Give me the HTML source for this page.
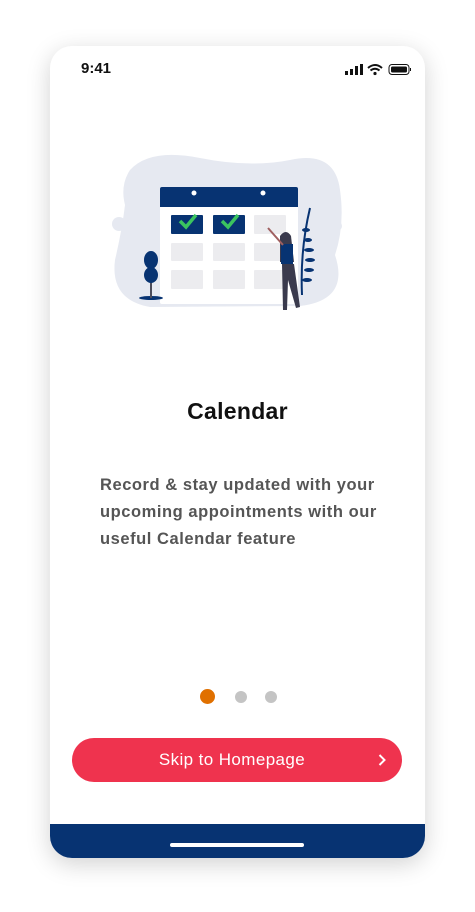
<!DOCTYPE html>
<html><head><style>
body{margin:0;width:475px;height:912px;background:#fff;position:relative;overflow:hidden;font-family:"Liberation Sans",sans-serif}
.phone{position:absolute;left:50px;top:46px;width:375px;height:812px;border-radius:22px;background:#fff;box-shadow:0 6px 24px rgba(0,0,0,.18);overflow:hidden}
.bar{position:absolute;left:0;bottom:0;width:375px;height:34px;background:#073372}
.home{position:absolute;left:120px;bottom:11px;width:134px;height:4px;border-radius:2px;background:#fff}
.time{position:absolute;left:31px;top:14px;font-size:15px;font-weight:bold;color:#111}
h1{position:absolute;top:352px;left:0;width:375px;text-align:center;margin:0;font-size:23px;font-weight:bold;color:#111;letter-spacing:0.3px}
p{position:absolute;left:50px;top:426px;width:300px;margin:0;font-size:16.5px;line-height:27px;color:#555;font-weight:bold;letter-spacing:0.55px}
.dot{position:absolute;top:645px;width:12px;height:12px;border-radius:50%;background:#c4c4c4}
.btn{position:absolute;left:22px;top:692px;width:330px;height:44px;border-radius:22px;background:#ef334e;color:#fff;font-size:17px;text-align:center;line-height:44px;letter-spacing:0.4px;text-indent:-10px}
</style></head><body>
<div class="phone">
<div class="time">9:41</div>
<svg style="position:absolute;left:295px;top:17px" width="66" height="14" viewBox="0 0 66 14">
<rect x="0" y="8" width="3" height="4" fill="#111"/><rect x="5" y="6" width="3" height="6" fill="#111"/><rect x="10" y="3" width="3" height="9" fill="#111"/><rect x="15" y="1" width="3" height="11" fill="#111"/>
<path d="M23 5 Q30 -1 37 5 M25.5 7.5 Q30 4 34.5 7.5" stroke="#111" stroke-width="2" fill="none"/><circle cx="30" cy="10.5" r="1.6" fill="#111"/>
<rect x="44" y="1.5" width="20" height="10" rx="3" fill="none" stroke="#111"/><rect x="46" y="3.5" width="16" height="6" rx="1.5" fill="#111"/><rect x="65" y="5" width="1.5" height="3" fill="#111"/>
</svg>
<svg style="position:absolute;left:50px;top:94px" width="260" height="180" viewBox="100 140 260 180">
<path d="M130 170 Q150 148 200 158 Q250 168 290 160 Q335 150 340 190 Q345 225 335 255 Q350 300 300 306 L150 307 Q110 300 115 260 Q122 230 125 205 Q120 185 130 170Z" fill="#e6e9f1"/>
<circle cx="119" cy="224" r="7" fill="#e6e9f1"/><circle cx="337" cy="226" r="5" fill="#e6e9f1"/><circle cx="326" cy="240" r="3" fill="#e6e9f1"/><circle cx="330" cy="251" r="5" fill="#e6e9f1"/>
<rect x="160" y="187" width="138" height="117" rx="2" fill="#fff"/>
<path d="M162 187 H296 a2 2 0 0 1 2 2 V207 H160 V189 a2 2 0 0 1 2-2Z" fill="#073372"/>
<circle cx="194" cy="193" r="2.5" fill="#fff"/><circle cx="263" cy="193" r="2.5" fill="#fff"/>
<g fill="#ececef">
<rect x="254" y="215" width="32" height="19" rx="1"/>
<rect x="171" y="243" width="32" height="18" rx="1"/><rect x="213" y="243" width="32" height="18" rx="1"/><rect x="254" y="243" width="32" height="18" rx="1"/>
<rect x="171" y="270" width="32" height="19" rx="1"/><rect x="213" y="270" width="32" height="19" rx="1"/><rect x="254" y="270" width="32" height="19" rx="1"/>
</g>
<rect x="171" y="215" width="32" height="19" rx="1" fill="#073372"/><rect x="213" y="215" width="32" height="19" rx="1" fill="#073372"/>
<path d="M180 221 L186 227 L196 215 M222 221 L228 227 L238 215" stroke="#3bc45f" stroke-width="3.5" fill="none"/>
<ellipse cx="151" cy="298" rx="12" ry="2" fill="#073372"/><rect x="150" y="280" width="2" height="18" fill="#4b4b5a"/>
<ellipse cx="151" cy="260" rx="7" ry="9" fill="#073372"/><ellipse cx="151" cy="275" rx="7" ry="8" fill="#073372"/>
<path d="M310 208 Q300 250 302 295" stroke="#073372" stroke-width="2" fill="none"/>
<g fill="#073372"><ellipse cx="306" cy="230" rx="4" ry="2"/><ellipse cx="308" cy="240" rx="4" ry="2"/><ellipse cx="309" cy="250" rx="5" ry="2"/><ellipse cx="310" cy="260" rx="5" ry="2"/><ellipse cx="309" cy="270" rx="5" ry="2"/><ellipse cx="307" cy="280" rx="5" ry="2"/></g>
<path d="M280 236 Q286 228 291 236 L294 262 L280 262Z" fill="#3a3a4d"/>
<rect x="281" y="244" width="12" height="20" fill="#073372"/>
<path d="M282 264 L294 264 L300 307 L296 308 L288 280 L287 310 L283 310Z" fill="#3a3a4d"/>
<path d="M283 245 L268 228" stroke="#a06060" stroke-width="2"/>
</svg>
<h1>Calendar</h1>
<p>Record &amp; stay updated with your upcoming appointments with our useful Calendar feature</p>
<div class="dot" style="left:150px;top:643px;width:15px;height:15px;background:#e07000"></div>
<div class="dot" style="left:185px"></div>
<div class="dot" style="left:215px"></div>
<div class="btn">Skip to Homepage<svg style="position:absolute;right:16px;top:16px" width="8" height="12" viewBox="0 0 8 12"><path d="M1.5 1 L6.5 6 L1.5 11" stroke="#fff" stroke-width="2" fill="none"/></svg></div>
<div class="bar"><div class="home"></div></div>
</div>
</body></html>
